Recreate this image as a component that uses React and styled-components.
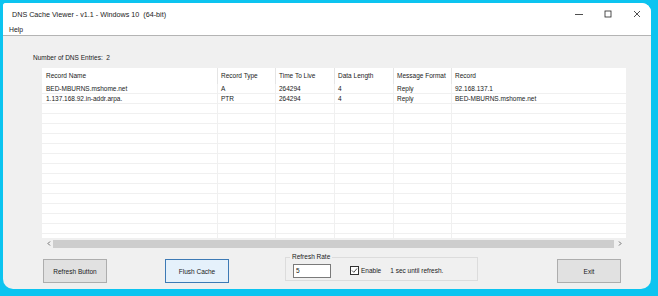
import React from 'react';
import styled, { createGlobalStyle } from 'styled-components';

const GlobalStyle = createGlobalStyle`
  html, body {
    margin: 0;
    padding: 0;
    background: #0cc4f0;
  }
  body {
    width: 658px;
    height: 296px;
    overflow: hidden;
    font-family: "Liberation Sans", Arial, sans-serif;
  }
`;

const Window = styled.div`
  margin: 3px 7px 0 3px;
  width: 648px;
  height: 286px;
  background: #f0f0f0;
  border-radius: 3px 9px 10px 10px;
  overflow: hidden;
  display: flex;
  flex-direction: column;
  font-size: 6.5px;
  color: #1a1a1a;
`;

const TitleBar = styled.div`
  height: 20px;
  background: #fff;
  display: flex;
  align-items: center;
  padding-left: 9px;
  padding-top: 1px;
  font-size: 7.2px;
`;

const Title = styled.div`
  flex: 1;
  white-space: pre;
`;

const Controls = styled.div`
  display: flex;
  align-items: center;
  height: 100%;
`;

const ControlBtn = styled.div`
  width: 29px;
  height: 100%;
  display: flex;
  align-items: center;
  justify-content: center;
`;

const MenuBar = styled.div`
  height: 11px;
  background: #fff;
  padding-left: 6px;
  display: flex;
  align-items: center;
  border-bottom: 1px solid #b4b4b4;
  font-size: 6.8px;
`;

const Content = styled.div`
  flex: 1;
  display: flex;
  flex-direction: column;
`;

const CountLabel = styled.div`
  margin: 17px 0 0 30px;
  line-height: 10px;
  white-space: pre;
`;

const ListView = styled.div`
  margin: 5px 0 0 39px;
  width: 584px;
  height: 181px;
  background: #fff;
  display: flex;
  flex-direction: column;
`;

const Rows = styled.div`
  flex: 1;
  overflow: hidden;
`;

const Row = styled.div`
  display: grid;
  grid-template-columns: 176px 58px 59px 59px 58px 1fr;
  height: ${p => (p.$header ? 16 : 10)}px;
  line-height: ${p => (p.$header ? 15 : 10)}px;
  border-bottom: ${p => (p.$header ? 'none' : '1px solid #f0f0f0')};
  box-sizing: border-box;
`;

const Cell = styled.div`
  padding-left: ${p => (p.$first ? 4 : 3)}px;
  border-right: ${p => (p.$last ? 'none' : `1px solid ${p.$header ? '#e5e5e5' : '#f0f0f0'}`)};
  white-space: nowrap;
  overflow: hidden;
`;

const ScrollBar = styled.div`
  height: 11px;
  background: #f0f0f0;
  display: flex;
  align-items: center;
  padding: 0 2px;
`;

const Arrow = styled.div`
  width: 9px;
  display: flex;
  align-items: center;
  justify-content: center;
`;

const Thumb = styled.div`
  flex: 1;
  height: 8px;
  background: #cdcdcd;
  margin: 0 1px 0 0;
`;

const BottomBar = styled.div`
  display: flex;
  align-items: flex-start;
  margin-top: 7px;
  padding-left: 40px;
`;

const Button = styled.div`
  width: 62px;
  height: 22px;
  margin-top: 3px;
  margin-left: ${p => p.$gap || 0}px;
  background: ${p => (p.$focus ? '#e5f1fb' : '#e1e1e1')};
  border: 1px solid ${p => (p.$focus ? '#3d7ab5' : '#adadad')};
  display: flex;
  align-items: center;
  justify-content: center;
`;

const GroupBox = styled.div`
  position: relative;
  margin-left: 56px;
  margin-top: 1px;
  width: 193px;
  height: 24px;
  border: 1px solid #dcdcdc;
  display: flex;
  align-items: center;
  padding-left: 7px;
  box-sizing: border-box;
  padding-top: 3px;
`;

const Legend = styled.div`
  position: absolute;
  top: -5px;
  left: 4px;
  padding: 0 2px;
  background: #f0f0f0;
  line-height: 8px;
`;

const RateInput = styled.div`
  width: 38px;
  height: 14px;
  box-sizing: border-box;
  background: #fff;
  border: 1px solid #7a7a7a;
  padding-left: 2px;
  line-height: 12px;
`;

const Check = styled.div`
  margin-left: 19px;
  width: 7px;
  height: 7px;
  border: 1px solid #333;
  background: #fff;
  display: flex;
  align-items: center;
  justify-content: center;
`;

const CheckLabel = styled.div`
  margin-left: 2px;
`;

const Countdown = styled.div`
  margin-left: 9px;
`;

const columns = ['Record Name', 'Record Type', 'Time To Live', 'Data Length', 'Message Format', 'Record'];
const records = [
  ['BED-MBURNS.mshome.net', 'A', '264294', '4', 'Reply', '92.168.137.1'],
  ['1.137.168.92.in-addr.arpa.', 'PTR', '264294', '4', 'Reply', 'BED-MBURNS.mshome.net'],
];

const renderRow = (cells, key, header) => (
  <Row key={key} $header={header}>
    {cells.map((c, i) => (
      <Cell key={i} $first={i === 0} $last={i === cells.length - 1} $header={header}>{c}</Cell>
    ))}
  </Row>
);

const App = () => {
  const blanks = Array.from({ length: 16 }, () => ['', '', '', '', '', '']);
  return (
    <>
      <GlobalStyle />
      <Window>
        <TitleBar>
          <Title>DNS Cache Viewer - v1.1 - Windows 10  (64-bit)</Title>
          <Controls>
            <ControlBtn>
              <svg width="8" height="8" viewBox="0 0 8 8"><path d="M0 4.5h8" stroke="#222" strokeWidth="0.8" /></svg>
            </ControlBtn>
            <ControlBtn>
              <svg width="8" height="8" viewBox="0 0 8 8"><rect x="1" y="1" width="6" height="6" fill="none" stroke="#222" strokeWidth="0.8" /></svg>
            </ControlBtn>
            <ControlBtn>
              <svg width="8" height="8" viewBox="0 0 8 8"><path d="M1 1l6 6M7 1l-6 6" stroke="#222" strokeWidth="0.8" /></svg>
            </ControlBtn>
          </Controls>
        </TitleBar>
        <MenuBar>Help</MenuBar>
        <Content>
          <CountLabel>Number of DNS Entries:  2</CountLabel>
          <ListView>
            <Rows>
              {renderRow(columns, 'h', true)}
              {records.map((r, i) => renderRow(r, `r${i}`, false))}
              {blanks.map((r, i) => renderRow(r, `b${i}`, false))}
            </Rows>
            <ScrollBar>
              <Arrow>
                <svg width="4" height="5" viewBox="0 0 4 5"><path d="M3 0.5L1 2.5L3 4.5" fill="none" stroke="#606060" strokeWidth="0.9" /></svg>
              </Arrow>
              <Thumb />
              <Arrow>
                <svg width="4" height="5" viewBox="0 0 4 5"><path d="M1 0.5L3 2.5L1 4.5" fill="none" stroke="#606060" strokeWidth="0.9" /></svg>
              </Arrow>
            </ScrollBar>
          </ListView>
          <BottomBar>
            <Button>Refresh Button</Button>
            <Button $gap={58} $focus>Flush Cache</Button>
            <GroupBox>
              <Legend>Refresh Rate</Legend>
              <RateInput>5</RateInput>
              <Check>
                <svg width="7" height="7" viewBox="0 0 7 7"><path d="M1 3.5L2.8 5.3L6 1.5" fill="none" stroke="#222" strokeWidth="0.8" /></svg>
              </Check>
              <CheckLabel>Enable</CheckLabel>
              <Countdown>1 sec until refresh.</Countdown>
            </GroupBox>
            <Button $gap={79}>Exit</Button>
          </BottomBar>
        </Content>
      </Window>
    </>
  );
};

export default App;
